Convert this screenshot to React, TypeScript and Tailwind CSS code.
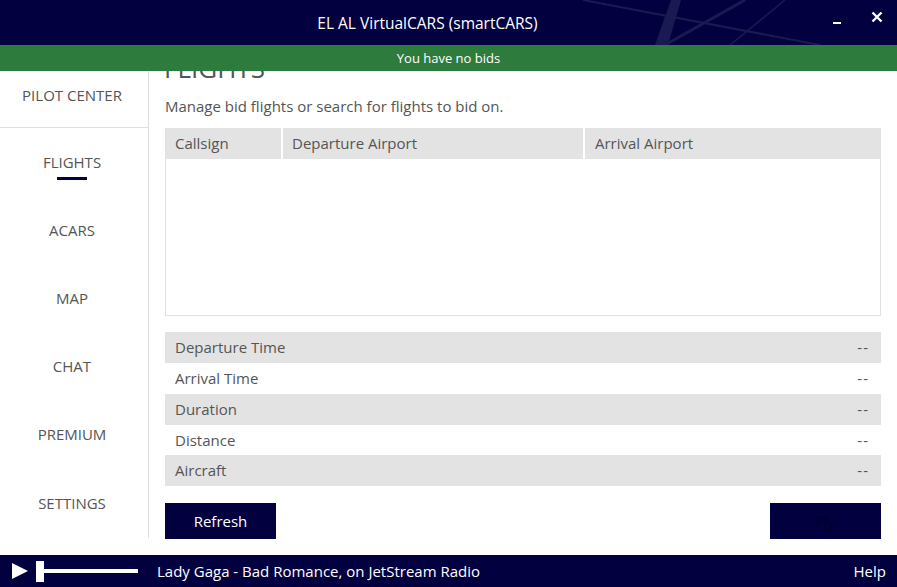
import React from "react";

const navy = "bg-[#03003f]";

function SideItem({ label, active, h }: { label: string; active?: boolean; h: string }) {
  return (
    <div className={`${h} flex flex-col items-center justify-center relative pr-[4px]`}>
      <span className="text-[15px] text-[#555]">{label}</span>
      {active && <div className="absolute left-[57px] top-[49px] w-[30px] h-[3px] bg-[#03003f]" />}
    </div>
  );
}

function DetailRow({ label, shaded, h }: { label: string; shaded?: boolean; h: string }) {
  return (
    <div className={`${h} flex items-center justify-between pl-[10px] pr-[12px] ${shaded ? "bg-[#e3e3e3]" : "bg-white"}`}>
      <span className="text-[15px] text-[#555]">{label}</span>
      <span className="text-[15px] text-[#555] tracking-[1px]">--</span>
    </div>
  );
}

export default function App() {
  return (
    <div
      className="w-[897px] h-[587px] flex flex-col bg-white overflow-hidden"
      style={{ fontFamily: '"Open Sans", "Noto Sans", sans-serif' }}
    >
      {/* Title bar */}
      <div className={`h-[45px] ${navy} relative flex items-center justify-center shrink-0`}>
        <svg className="absolute left-0 top-0" width="897" height="45" viewBox="0 0 897 45">
          <line x1="583" y1="0" x2="820" y2="45" stroke="#1a1a52" strokeWidth="2" />
          <polygon points="671,0 681,0 668,45 655,45" fill="#1a1a52" />
          <line x1="745" y1="0" x2="665" y2="45" stroke="#1a1a52" strokeWidth="3" />
          <line x1="785" y1="0" x2="730" y2="45" stroke="#1a1a52" strokeWidth="1.5" />
        </svg>
        <span className="relative text-white text-[15.5px] mt-[3px] mr-[42px]">EL AL VirtualCARS (smartCARS)</span>
        <div className="absolute left-[833px] top-[22px] w-[8px] h-[2px] bg-white" />
        <svg className="absolute left-[871px] top-[11px]" width="12" height="12" viewBox="0 0 12 12">
          <path d="M1.5 1.5 L10.5 10.5 M10.5 1.5 L1.5 10.5" stroke="white" strokeWidth="2.4" />
        </svg>
      </div>
      {/* Green bar */}
      <div className="h-[26px] bg-[#2e7b3e] flex items-center justify-center shrink-0 relative z-10">
        <span className="text-white text-[13px] mt-[2px]">You have no bids</span>
      </div>
      {/* Middle */}
      <div className="flex-1 flex min-h-0">
        <div className="w-[149px] shrink-0 flex flex-col">
          <div className="border-r border-[#e0e0e0] h-[467px] flex flex-col">
            <div className="h-[57px] flex items-center justify-center border-b border-[#e0e0e0] pb-[7px] pr-[4px]">
              <span className="text-[15px] text-[#555]">PILOT CENTER</span>
            </div>
            <SideItem label="FLIGHTS" active h="h-[69px]" />
            <SideItem label="ACARS" h="h-[68px]" />
            <SideItem label="MAP" h="h-[68px]" />
            <SideItem label="CHAT" h="h-[68px]" />
            <SideItem label="PREMIUM" h="h-[69px]" />
            <SideItem label="SETTINGS" h="h-[69px]" />
          </div>
        </div>
        <div className="flex-1 flex flex-col pl-[16px] pr-[16px] overflow-hidden">
          <div className="text-[26px] leading-[32px] text-[#555] mt-[-19px] ml-[-1px]">FLIGHTS</div>
          <div className="text-[15px] text-[#555] mt-[12px] leading-[20px]">Manage bid flights or search for flights to bid on.</div>
          {/* Table */}
          <div className="mt-[12px] h-[188px] border border-[#e0e0e0] flex flex-col">
            <div className="h-[31px] flex bg-[#e3e3e3] -m-px">
              <div className="w-[118px] flex items-center pl-[10px] border-r-2 border-white">
                <span className="text-[15px] text-[#555]">Callsign</span>
              </div>
              <div className="w-[302px] flex items-center pl-[9px] border-r-2 border-white">
                <span className="text-[15px] text-[#555]">Departure Airport</span>
              </div>
              <div className="flex-1 flex items-center pl-[10px]">
                <span className="text-[15px] text-[#555]">Arrival Airport</span>
              </div>
            </div>
          </div>
          {/* Details */}
          <div className="mt-[16px] flex flex-col">
            <DetailRow label="Departure Time" shaded h="h-[31px]" />
            <DetailRow label="Arrival Time" h="h-[31px]" />
            <DetailRow label="Duration" shaded h="h-[31px]" />
            <DetailRow label="Distance" h="h-[30px]" />
            <DetailRow label="Aircraft" shaded h="h-[31px]" />
          </div>
          <div className="mt-[17px] flex justify-between">
            <button className={`w-[111px] h-[36px] ${navy} text-white text-[15px]`}>Refresh</button>
            <button className={`w-[111px] h-[36px] ${navy} text-[#000020] text-[15px]`}>Fly</button>
          </div>
        </div>
      </div>
      {/* Footer */}
      <div className={`h-[32px] ${navy} flex items-center shrink-0 relative`}>
        <svg className="ml-[12px]" width="16" height="16" viewBox="0 0 16 16">
          <polygon points="0,0 16,8 0,16" fill="white" />
        </svg>
        <div className="ml-[8px] flex items-center">
          <div className="w-[8px] h-[21px] bg-white" />
          <div className="w-[94px] h-[4px] bg-white" />
        </div>
        <span className="ml-[19px] text-white text-[15px]">Lady Gaga - Bad Romance, on JetStream Radio</span>
        <span className="ml-auto mr-[11px] text-white text-[15px]">Help</span>
      </div>
    </div>
  );
}
